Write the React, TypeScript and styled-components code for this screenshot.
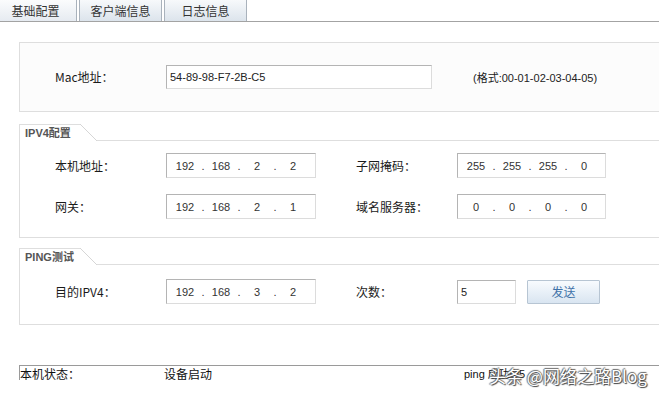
import * as React from "react";
import styled, { createGlobalStyle } from "styled-components";

const GlobalStyle = createGlobalStyle`
  * { box-sizing: border-box; }
  html, body {
    margin: 0;
    padding: 0;
    background: #ffffff;
    overflow: hidden;
  }
  body {
    font-family: "Liberation Sans", "Noto Sans CJK SC", sans-serif;
    font-size: 12px;
    color: #222;
  }
`;

const Page = styled.div`
  width: 659px;
  height: 399px;
  overflow: hidden;
  position: relative;
`;

const TabBar = styled.div`
  display: flex;
  height: 22px;
  margin-left: -6px;
  border-bottom: 1px solid #a3a3a3;
  width: 665px;
`;

const Tab = styled.div<{ active?: boolean }>`
  width: 83px;
  height: 21px;
  margin-right: 2px;
  display: flex;
  align-items: center;
  justify-content: center;
  font-family: "Noto Sans CJK SC", sans-serif;
  font-size: 12px;
  color: #333;
  border-left: 1px solid #a9b2bc;
  border-right: 1px solid #a9b2bc;
  background: ${({ active }) =>
    active
      ? "linear-gradient(#fbfcfd, #e6ebf1)"
      : "linear-gradient(#f7f9fb, #dce4ec)"};
`;

const Content = styled.div`
  padding: 20px 0 0 19px;
  width: 680px;
`;

const Panel = styled.div`
  border: 1px solid #dedede;
  background: #fcfcfc;
  padding: 21px 0 22px 35px;
`;

const Section = styled.div<{ gap: number }>`
  margin-top: ${({ gap }) => gap}px;
`;

const LegendRow = styled.div`
  display: flex;
  height: 17px;
`;

const Legend = styled.div`
  position: relative;
  width: 61px;
  height: 17px;
  margin-right: 16px;
  padding-left: 5px;
  border-top: 1px solid #dedede;
  border-left: 1px solid #dedede;
  font-family: "Liberation Sans", "Noto Sans CJK SC", sans-serif;
  font-weight: bold;
  font-size: 11px;
  line-height: 16px;
  color: #555;
  white-space: nowrap;

  &::after {
    content: "";
    position: absolute;
    top: -1px;
    right: -17px;
    width: 17px;
    height: 17px;
    background: linear-gradient(
      to top right,
      transparent calc(50% - 0.7px),
      #d6d6d6 50%,
      transparent calc(50% + 0.7px)
    );
  }
`;

const LegendLine = styled.div`
  flex: 1;
  border-bottom: 1px solid #dedede;
`;

const SectionBody = styled.div<{ top: number; bottom: number }>`
  border-left: 1px solid #dedede;
  border-bottom: 1px solid #dedede;
  padding: ${({ top, bottom }) => `${top}px 0 ${bottom}px 35px`};
  display: flex;
  flex-direction: column;
  gap: 16px;
`;

const Row = styled.div`
  display: flex;
  align-items: center;
  height: 25px;
`;

const Label = styled.div<{ width: number }>`
  width: ${({ width }) => width}px;
  flex-shrink: 0;
  font-family: "Noto Sans CJK SC", sans-serif;
  font-size: 12px;
  color: #1a1a1a;
  white-space: nowrap;
`;

const Field = styled.div<{ width: number; height?: number }>`
  width: ${({ width }) => width}px;
  height: ${({ height }) => height || 25}px;
  flex-shrink: 0;
  display: flex;
  align-items: center;
  background: #fff;
  border: 1px solid;
  border-color: #b4b4b4 #dcdcdc #dcdcdc #b4b4b4;
  font-family: "Liberation Sans", sans-serif;
  font-size: 11px;
  color: #222;
  padding-left: 3px;
`;

const IpField = styled(Field)`
  padding-left: 3px;
`;

const Octet = styled.span`
  width: 30px;
  text-align: center;
  color: #333;
`;

const Dot = styled.span`
  width: 6px;
  text-align: center;
  color: #333;
`;

const Spacer = styled.div<{ width: number }>`
  width: ${({ width }) => width}px;
  flex-shrink: 0;
`;

const Hint = styled.div`
  font-family: "Liberation Sans", "Noto Sans CJK SC", sans-serif;
  font-size: 11px;
  color: #222;
  white-space: nowrap;
`;

const SendButton = styled.button`
  width: 73px;
  height: 24px;
  margin-left: 11px;
  padding: 0;
  border: 1px solid #b7c5d3;
  border-radius: 1px;
  background: linear-gradient(#f8fbfe, #d9e5f1);
  font-family: "Noto Sans CJK SC", sans-serif;
  font-size: 12px;
  color: #3f72a8;
`;

const StatusBar = styled.div`
  position: relative;
  margin-top: 40px;
  height: 20px;
  border-top: 1px solid #9a9a9a;
  display: flex;
  align-items: flex-start;
  font-family: "Noto Sans CJK SC", sans-serif;
  font-size: 12px;
  color: #111;

  &::before {
    content: "";
    position: absolute;
    left: 0;
    top: 0;
    height: 14px;
    border-left: 1px solid #9a9a9a;
  }
`;

const StatusCell = styled.div<{ width?: number }>`
  width: ${({ width }) => (width ? `${width}px` : "auto")};
  flex-shrink: 0;
  line-height: 16px;
  padding-left: 1px;
  white-space: nowrap;
`;

const PingText = styled(StatusCell)`
  font-family: "Liberation Sans", "Noto Sans CJK SC", sans-serif;
  font-size: 11px;
`;

const Watermark = styled.div`
  position: absolute;
  left: 470px;
  top: -1px;
  font-family: "Noto Sans CJK SC", sans-serif;
  font-size: 17px;
  line-height: 22px;
  color: #ffffff;
  white-space: nowrap;
  text-shadow: 1px 1px 1px #3a3a3a, -1px 0 1px #6a6a6a, 0 -1px 1px #6a6a6a;
`;

const Ip = ({ value, width = 150 }: { value: string; width?: number }) => {
  const parts = value.split(".");
  return (
    <IpField width={width}>
      {parts.map((p, i) => (
        <React.Fragment key={i}>
          <Octet>{p}</Octet>
          {i < parts.length - 1 && <Dot>.</Dot>}
        </React.Fragment>
      ))}
    </IpField>
  );
};

const App = () => {
  return (
    <Page>
      <GlobalStyle />
      <TabBar>
        <Tab active>基础配置</Tab>
        <Tab>客户端信息</Tab>
        <Tab>日志信息</Tab>
      </TabBar>
      <Content>
        <Panel>
          <Row>
            <Label width={111}>Mac地址：</Label>
            <Field width={266} height={24}>54-89-98-F7-2B-C5</Field>
            <Spacer width={41} />
            <Hint>(格式:00-01-02-03-04-05)</Hint>
          </Row>
        </Panel>

        <Section gap={12}>
          <LegendRow>
            <Legend>IPV4配置</Legend>
            <LegendLine />
          </LegendRow>
          <SectionBody top={12} bottom={18}>
            <Row>
              <Label width={111}>本机地址：</Label>
              <Ip value="192.168.2.2" />
              <Spacer width={40} />
              <Label width={101}>子网掩码：</Label>
              <Ip value="255.255.255.0" width={149} />
            </Row>
            <Row>
              <Label width={111}>网关：</Label>
              <Ip value="192.168.2.1" />
              <Spacer width={40} />
              <Label width={101}>域名服务器：</Label>
              <Ip value="0.0.0.0" width={149} />
            </Row>
          </SectionBody>
        </Section>

        <Section gap={10}>
          <LegendRow>
            <Legend>PING测试</Legend>
            <LegendLine />
          </LegendRow>
          <SectionBody top={14} bottom={20}>
            <Row>
              <Label width={111}>目的IPV4：</Label>
              <Ip value="192.168.3.2" />
              <Spacer width={40} />
              <Label width={101}>次数：</Label>
              <Field width={59} height={24}>5</Field>
              <SendButton>发送</SendButton>
            </Row>
          </SectionBody>
        </Section>

        <StatusBar>
          <StatusCell width={144}>本机状态：</StatusCell>
          <StatusCell width={300}>设备启动</StatusCell>
          <PingText>ping 成功5/5</PingText>
          <Watermark>头条 @网络之路Blog</Watermark>
        </StatusBar>
      </Content>
    </Page>
  );
};

export default App;
